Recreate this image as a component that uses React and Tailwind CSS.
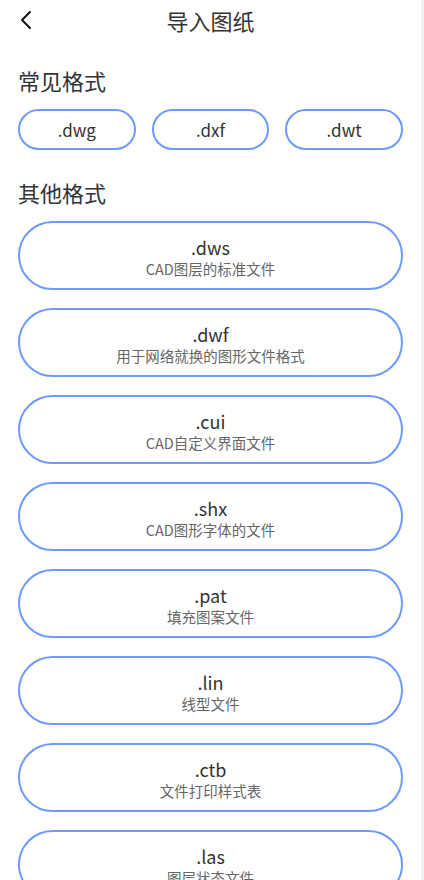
const COMMON = [".dwg", ".dxf", ".dwt"];

const OTHERS = [
  [".dws", "CAD图层的标准文件"],
  [".dwf", "用于网络就换的图形文件格式"],
  [".cui", "CAD自定义界面文件"],
  [".shx", "CAD图形字体的文件"],
  [".pat", "填充图案文件"],
  [".lin", "线型文件"],
  [".ctb", "文件打印样式表"],
  [".las", "图层状态文件"],
];

function BackIcon() {
  return (
    <svg width="14" height="20" viewBox="0 0 14 20" fill="none">
      <path d="M11 2 L3 10 L11 18" stroke="#111" strokeWidth="2" strokeLinecap="round" strokeLinejoin="round" />
    </svg>
  );
}

export default function App() {
  return (
    <div className="flex h-[880px] w-[424px] overflow-hidden bg-white font-['Noto_Sans_CJK_SC','Noto_Sans',sans-serif] text-[#333]">
      <div className="flex-1 px-[18px]">
        <header className="relative flex h-10 items-center justify-center">
          <button type="button" className="absolute left-[1px] top-[10px]">
            <BackIcon />
          </button>
          <h1 className="text-[22px] leading-[30px] text-[#333]">导入图纸</h1>
        </header>

        <h2 className="mt-[25px] text-[22px] leading-[30px]">常见格式</h2>
        <div className="mt-[14px] grid grid-cols-3 gap-[16px]">
          {COMMON.map((ext) => (
            <button
              key={ext}
              type="button"
              className="h-[41px] rounded-full border-2 border-[#6e9aff] text-[17px] text-[#333]"
            >
              {ext}
            </button>
          ))}
        </div>

        <h2 className="mt-[27px] text-[22px] leading-[30px]">其他格式</h2>
        <div className="mt-[14px] flex flex-col gap-[18px]">
          {OTHERS.map(([ext, desc]) => (
            <button
              key={ext}
              type="button"
              className="flex h-[69px] shrink-0 flex-col items-center justify-center gap-[3px] rounded-full border-2 border-[#6e9aff] pt-[4px]"
            >
              <span className="text-[18px] leading-[20px] text-[#333]">{ext}</span>
              <span className="text-[14.5px] leading-[18px] text-[#666]">{desc}</span>
            </button>
          ))}
        </div>
      </div>
      <div className="w-[3px] shrink-0 bg-[#efefef]" />
    </div>
  );
}
